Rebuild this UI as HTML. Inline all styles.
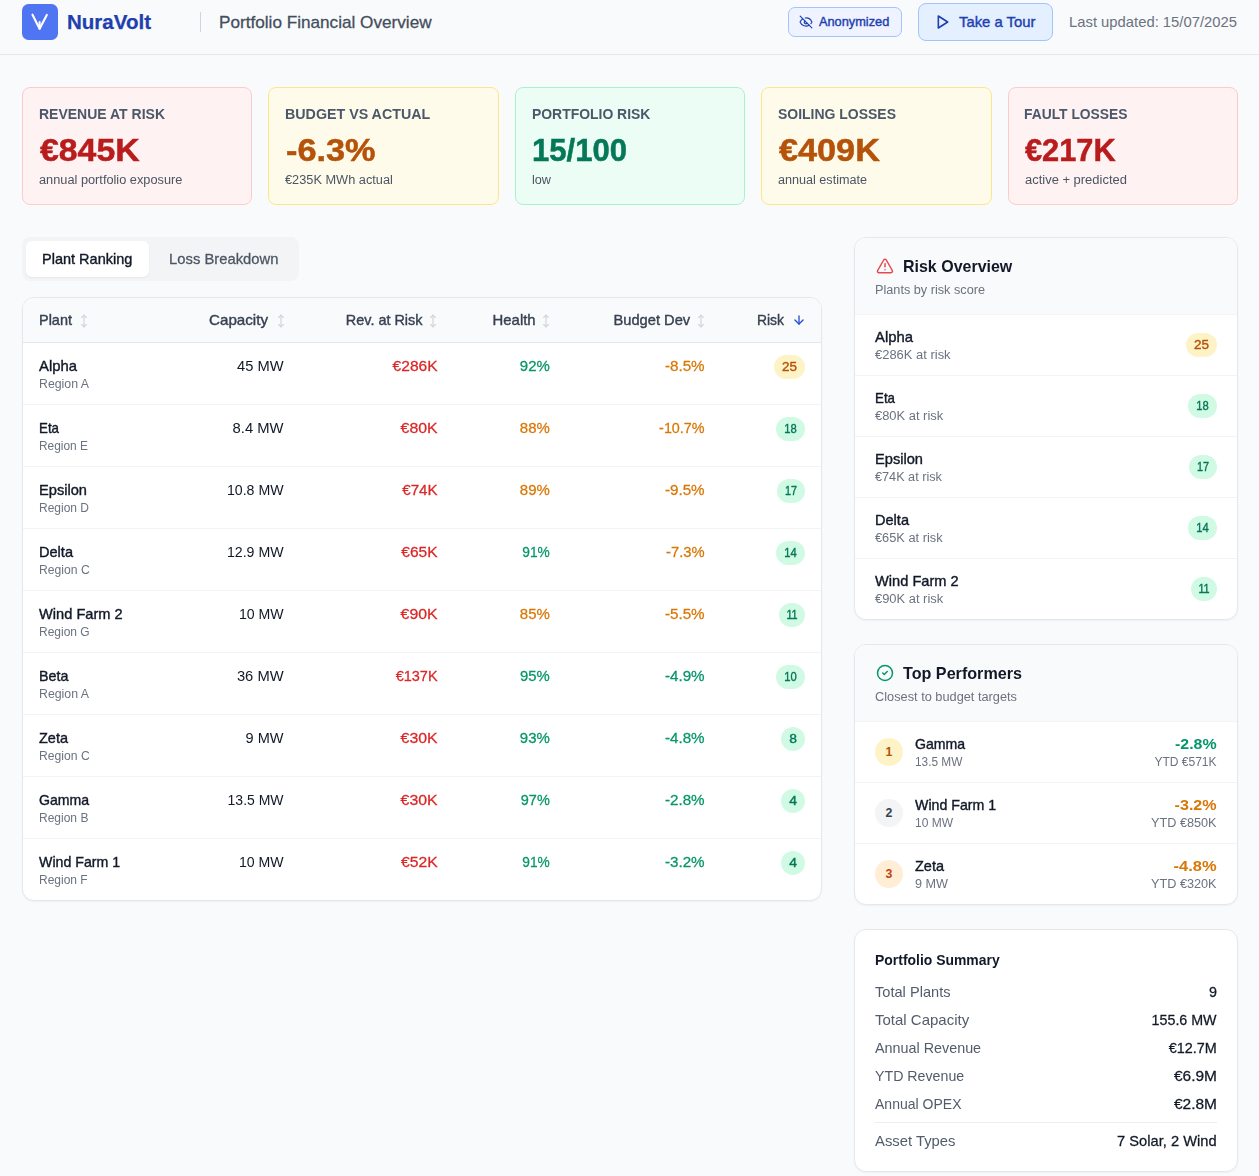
<!DOCTYPE html>
<html lang="en">
<head>
<meta charset="utf-8">
<title>NuraVolt - Portfolio Financial Overview</title>
<style>
*{box-sizing:border-box;margin:0;padding:0}
html,body{width:1259px;height:1176px;overflow:hidden}
body{opacity:.999;background:#f9fafb;font-family:"Liberation Sans",Arial,sans-serif;color:#111827;position:relative}
.m{-webkit-text-stroke:.26px currentColor}
.mm{-webkit-text-stroke:.38px currentColor}
.hdr{position:absolute;left:0;top:0;width:1259px;height:55px;border-bottom:1px solid #e5e7eb;background:#f9fafb}
.logo{position:absolute;left:22px;top:4px;width:35.500px;height:36px;border-radius:6.500px;background:#4f75f3}
.logo svg{position:absolute;left:0;top:0}
.brand{position:absolute;left:66.700px;top:8px;font-size:20.5px;line-height:28px;font-weight:700;color:#1e40af;-webkit-text-stroke:.25px currentColor;white-space:nowrap}
.hdiv{position:absolute;left:200px;top:12px;width:1px;height:20px;background:#d1d5db}
.ptitle{position:absolute;left:218.800px;top:10px;font-size:16.4px;line-height:24px;color:#434d5b;white-space:nowrap}
.anon{position:absolute;left:788px;top:7px;width:114px;height:30px;border:1px solid #a5c4fc;border-radius:7px;background:#eef3ff;color:#1e40af;font-size:12.3px;line-height:28px;white-space:nowrap}
.anon svg{position:absolute;left:9.500px;top:7px}
.anon .x{position:absolute;left:29.600px;top:0}
.tour{position:absolute;left:918px;top:3px;width:135px;height:38px;border:1px solid #a0c4fb;border-radius:8px;background:#e4efff;color:#1e40af;font-size:14.4px;line-height:36px;white-space:nowrap}
.tour svg{position:absolute;left:16px;top:10px}
.tour .x{position:absolute;left:40.300px;top:0}
.upd{position:absolute;left:1068.800px;top:12px;font-size:14.3px;line-height:20px;color:#6b7280;white-space:nowrap}

.kpi{position:absolute;top:87px;width:230.4px;height:118px;border:1px solid;border-radius:8px}
.kpi div{position:absolute;left:16.500px;white-space:nowrap}
.kpi .l{top:15.900px;left:15.800px;font-size:14.3px;line-height:20px;color:#4b5869;font-weight:700}
.kpi .v{top:45.200px;left:16.600px;font-size:31px;line-height:36px;font-weight:700;-webkit-text-stroke:.5px currentColor}
.kpi .s{top:84px;left:16px;font-size:12.3px;line-height:16px;color:#4b5563}
.k-red{background:#fef2f2;border-color:#fecaca}.k-red .v{color:#b91c1c}
.k-yel{background:#fffbeb;border-color:#fde68a}.k-yel .v{color:#b45309}
.k-grn{background:#ecfdf5;border-color:#a7f3d0}.k-grn .v{color:#047857}

.tabs{position:absolute;left:22px;top:237px;width:276.500px;height:44px;border-radius:8px;background:#f3f4f6}
.tab{position:absolute;top:4px;height:36px;border-radius:6px}
.tab div{position:absolute;top:0;font-size:14.4px;line-height:36px;white-space:nowrap;color:#4b5563}
.tab.on{left:4px;width:122.500px;background:#fff;box-shadow:0 1px 2px rgba(0,0,0,.06)}
.tab.on div{left:16.200px;color:#111827}
.tab.off{left:131px;width:141px}
.tab.off div{left:16.200px}

.card{position:absolute;background:#fff;border:1px solid #e5e7eb;border-radius:12px;box-shadow:0 1px 2px rgba(0,0,0,.05);overflow:hidden}
.tbl{left:22px;top:297px;width:800px;height:604px}
.th{position:absolute;left:0;top:0;width:798px;height:45px;background:#f9fafb;border-bottom:1px solid #e5e7eb;font-size:14.4px;line-height:20px;color:#374151}
.th div{position:absolute;top:12px;white-space:nowrap}
.si{position:absolute;top:16px}
.tr{position:absolute;left:0;width:798px;height:62px;border-bottom:1px solid #f3f4f6;font-size:14.4px;line-height:20px}
.tr.last{border-bottom:0}
.tr div{position:absolute;white-space:nowrap}
.tr .n{left:16.300px;top:12.500px;color:#111827}
.tr .r{left:16.300px;top:32.700px;font-size:12.3px;line-height:16px;color:#6b7280}
.tr .c{right:537px;top:12.500px;color:#111827}
.tr .rv{right:383px;top:12.500px;color:#dc2626}
.tr .h{right:271.300px;top:12.500px}
.tr .b{right:116.300px;top:12.500px}
.k{height:24px;border-radius:12px}
.k div{position:absolute;top:0;font-size:12.3px;line-height:24px;white-space:nowrap}
.tr .k{top:12px;right:16px}
.g{color:#059669}.o{color:#d97706}
.kg{background:#d1fae5;color:#047857}.ky{background:#fef3c7;color:#b45309}

.rc{left:854px;width:384px}
.ch{position:absolute;left:0;top:0;width:382px;height:77px;background:#f9fafb;border-bottom:1px solid #f3f4f6}
.ch svg{position:absolute;left:20.500px;top:19px}
.ch .t{position:absolute;left:47.800px;top:16px;font-size:16.3px;line-height:24px;font-weight:700;color:#111827;white-space:nowrap}
.ch .d{position:absolute;left:20.400px;top:43.500px;font-size:12.3px;line-height:16px;color:#6b7280;white-space:nowrap}
.rr{position:absolute;left:0;width:382px;height:61px;border-bottom:1px solid #f3f4f6}
.rr.last{border-bottom:0}
.rr div{position:absolute;white-space:nowrap}
.rr .n{left:20.400px;top:12px;font-size:14.4px;line-height:20px;color:#111827}
.rr .d{left:20.400px;top:32px;font-size:12.3px;line-height:16px;color:#6b7280}
.rr .k{right:20px;top:18px}
.pr .num{left:20px;top:16px;width:28px;height:28px;border-radius:14px;font-size:12.3px;line-height:28px;font-weight:700;text-align:center}
.pr .n{left:60.300px}.pr .d{left:60.300px}
.pr .p{right:20.500px;top:12px;font-size:14.4px;line-height:20px;font-weight:700}
.pr .y{right:20.300px;top:32px;font-size:12.3px;line-height:16px;color:#6b7280}
.n1{background:#fef3c7;color:#b45309}.n2{background:#f3f4f6;color:#374151}.n3{background:#ffedd5;color:#c2410c}
.sum{top:929px;height:243px}
.sum .t{position:absolute;left:20.300px;top:20px;font-size:14.3px;line-height:20px;font-weight:700;color:#111827;white-space:nowrap}
.sr{position:absolute;left:20px;width:342px;height:20px;font-size:14.4px;line-height:20px}
.sr div{position:absolute;top:0;white-space:nowrap}
.sr .a{left:.3px;color:#525c6b}.sr .z{right:.3px;color:#111827}
.sdiv{position:absolute;left:20px;width:342px;top:192px;height:1px;background:#eceef1}
</style>
</head>
<body>
<div class="hdr">
  <div class="logo"><svg width="36" height="36" viewBox="0 0 36 36" fill="none" stroke="#fff" stroke-width="2.1" stroke-linecap="round" stroke-linejoin="round"><path d="M10.500 10.700 L17.6 24.8 L24.800 10.900"/><path d="M17.6 18 L17.6 24.500"/></svg></div>
  <div class="brand" style="transform:scaleX(1.0011);transform-origin:left center;">NuraVolt</div>
  <div class="hdiv"></div>
  <div class="ptitle m" style="transform:scaleX(1.0466);transform-origin:left center;">Portfolio Financial Overview</div>
  <div class="anon"><svg width="14" height="14" viewBox="0 0 24 24" fill="none" stroke="#1e40af" stroke-width="2" stroke-linecap="round" stroke-linejoin="round"><path d="M10.733 5.076a10.744 10.744 0 0 1 11.205 6.575 1 1 0 0 1 0 .696 10.747 10.747 0 0 1-1.444 2.490"/><path d="M14.084 14.158a3 3 0 0 1-4.242-4.242"/><path d="M17.479 17.499a10.750 10.750 0 0 1-15.417-5.151 1 1 0 0 1 0-.696 10.750 10.750 0 0 1 4.446-5.143"/><path d="M2 2l20 20"/></svg><div class="x mm" style="transform:scaleX(1.0388);transform-origin:left center;">Anonymized</div></div>
  <div class="tour"><svg width="16" height="16" viewBox="0 0 24 24" fill="none" stroke="#1e40af" stroke-width="2.4" stroke-linecap="round" stroke-linejoin="round"><path d="M5 3l14 9-14 9z"/></svg><div class="x mm" style="transform:scaleX(1.0318);transform-origin:left center;">Take a Tour</div></div>
  <div class="upd" style="transform:scaleX(1.0358);transform-origin:left center;">Last updated: 15/07/2025</div>
</div>
<div class="kpi k-red" style="left:22px"><div class="l" style="transform:scaleX(0.9791);transform-origin:left center;">REVENUE AT RISK</div><div class="v" style="transform:scaleX(1.0902);transform-origin:left center;">€845K</div><div class="s" style="transform:scaleX(1.0383);transform-origin:left center;">annual portfolio exposure</div></div>
<div class="kpi k-yel" style="left:268.4px"><div class="l" style="transform:scaleX(0.9971);transform-origin:left center;">BUDGET VS ACTUAL</div><div class="v" style="transform:scaleX(1.1052);transform-origin:left center;">-6.3%</div><div class="s" style="transform:scaleX(1.0384);transform-origin:left center;">€235K MWh actual</div></div>
<div class="kpi k-grn" style="left:514.8px"><div class="l" style="transform:scaleX(0.9742);transform-origin:left center;">PORTFOLIO RISK</div><div class="v" style="transform:scaleX(1.0029);transform-origin:left center;">15/100</div><div class="s" style="transform:scaleX(1.0296);transform-origin:left center;">low</div></div>
<div class="kpi k-yel" style="left:761.2px"><div class="l" style="transform:scaleX(0.9772);transform-origin:left center;">SOILING LOSSES</div><div class="v" style="transform:scaleX(1.1044);transform-origin:left center;">€409K</div><div class="s" style="transform:scaleX(1.0250);transform-origin:left center;">annual estimate</div></div>
<div class="kpi k-red" style="left:1007.6px"><div class="l" style="transform:scaleX(0.9676);transform-origin:left center;">FAULT LOSSES</div><div class="v" style="transform:scaleX(0.9917);transform-origin:left center;">€217K</div><div class="s" style="transform:scaleX(1.0534);transform-origin:left center;">active + predicted</div></div>
<div class="tabs"><div class="tab on"><div class="mm" style="transform:scaleX(1.0088);transform-origin:left center;">Plant Ranking</div></div><div class="tab off"><div class="m" style="transform:scaleX(1.0291);transform-origin:left center;">Loss Breakdown</div></div></div>
<div class="card tbl">
  <div class="th">
    <div class="mm" style="left:16.300px;transform:scaleX(1.0057);transform-origin:left center;">Plant</div><svg class="si" style="left:54.0px;top:16px" width="14" height="14" viewBox="0 0 24 24" fill="none" stroke="#d1d5db" stroke-width="2" stroke-linecap="round" stroke-linejoin="round"><path d="M8 18l4 4 4-4"/><path d="M8 6l4-4 4 4"/><path d="M12 2v20"/></svg>
    <div class="mm" style="right:552.7px;transform:scaleX(1.0536);transform-origin:right center;">Capacity</div><svg class="si" style="left:250.6px;top:16px" width="14" height="14" viewBox="0 0 24 24" fill="none" stroke="#d1d5db" stroke-width="2" stroke-linecap="round" stroke-linejoin="round"><path d="M8 18l4 4 4-4"/><path d="M8 6l4-4 4 4"/><path d="M12 2v20"/></svg>
    <div class="mm" style="right:398.3px;transform:scaleX(1.0026);transform-origin:right center;">Rev. at Risk</div><svg class="si" style="left:403.3px;top:16px" width="14" height="14" viewBox="0 0 24 24" fill="none" stroke="#d1d5db" stroke-width="2" stroke-linecap="round" stroke-linejoin="round"><path d="M8 18l4 4 4-4"/><path d="M8 6l4-4 4 4"/><path d="M12 2v20"/></svg>
    <div class="mm" style="right:285.7px;transform:scaleX(1.0334);transform-origin:right center;">Health</div><svg class="si" style="left:516.3px;top:16px" width="14" height="14" viewBox="0 0 24 24" fill="none" stroke="#d1d5db" stroke-width="2" stroke-linecap="round" stroke-linejoin="round"><path d="M8 18l4 4 4-4"/><path d="M8 6l4-4 4 4"/><path d="M12 2v20"/></svg>
    <div class="mm" style="right:131px;transform:scaleX(1.0199);transform-origin:right center;">Budget Dev</div><svg class="si" style="left:671.3px;top:16px" width="14" height="14" viewBox="0 0 24 24" fill="none" stroke="#d1d5db" stroke-width="2" stroke-linecap="round" stroke-linejoin="round"><path d="M8 18l4 4 4-4"/><path d="M8 6l4-4 4 4"/><path d="M12 2v20"/></svg>
    <div class="mm" style="right:36.7px;transform:scaleX(0.9648);transform-origin:right center;">Risk</div><svg class="si" style="left:768.8px;top:14.7px" width="14" height="14" viewBox="0 0 24 24" fill="none" stroke="#2450d6" stroke-width="2.3" stroke-linecap="round" stroke-linejoin="round"><path d="M12 5v14"/><path d="M19 12l-7 7-7-7"/></svg>
  </div>
  <div class="tr" style="top:45px"><div class="n mm" style="transform:scaleX(1.0323);transform-origin:left center;">Alpha</div><div class="r" style="transform:scaleX(1.0016);transform-origin:left center;">Region A</div><div class="c" style="transform:scaleX(1.0202);transform-origin:right center;">45 MW</div><div class="rv m" style="transform:scaleX(1.0811);transform-origin:right center;">€286K</div><div class="h m g" style="transform:scaleX(1.0412);transform-origin:right center;">92%</div><div class="b m o" style="transform:scaleX(1.0560);transform-origin:right center;">-8.5%</div><div class="k ky" style="width:31px"><div class="mm" style="left:0;width:100%;text-align:center;transform:scaleX(1.0959);transform-origin:center center;">25</div></div></div>
  <div class="tr" style="top:107px"><div class="n mm" style="transform:scaleX(0.9255);transform-origin:left center;">Eta</div><div class="r" style="transform:scaleX(0.9685);transform-origin:left center;">Region E</div><div class="c" style="transform:scaleX(1.0287);transform-origin:right center;">8.4 MW</div><div class="rv m" style="transform:scaleX(1.1009);transform-origin:right center;">€80K</div><div class="h m o" style="transform:scaleX(1.0412);transform-origin:right center;">88%</div><div class="b m o" style="transform:scaleX(0.9976);transform-origin:right center;">-10.7%</div><div class="k kg" style="width:29px"><div class="mm" style="left:0;width:100%;text-align:center;transform:scaleX(0.9132);transform-origin:center center;">18</div></div></div>
  <div class="tr" style="top:169px"><div class="n mm" style="transform:scaleX(1.0169);transform-origin:left center;">Epsilon</div><div class="r" style="transform:scaleX(0.9753);transform-origin:left center;">Region D</div><div class="c" style="transform:scaleX(0.9847);transform-origin:right center;">10.8 MW</div><div class="rv m" style="transform:scaleX(1.0503);transform-origin:right center;">€74K</div><div class="h m o" style="transform:scaleX(1.0412);transform-origin:right center;">89%</div><div class="b m o" style="transform:scaleX(1.0560);transform-origin:right center;">-9.5%</div><div class="k kg" style="width:28px"><div class="mm" style="left:0;width:100%;text-align:center;transform:scaleX(0.8800);transform-origin:center center;">17</div></div></div>
  <div class="tr" style="top:231px"><div class="n mm" style="transform:scaleX(1.0116);transform-origin:left center;">Delta</div><div class="r" style="transform:scaleX(0.9890);transform-origin:left center;">Region C</div><div class="c" style="transform:scaleX(0.9847);transform-origin:right center;">12.9 MW</div><div class="rv m" style="transform:scaleX(1.0801);transform-origin:right center;">€65K</div><div class="h m g" style="transform:scaleX(0.9544);transform-origin:right center;">91%</div><div class="b m o" style="transform:scaleX(1.0241);transform-origin:right center;">-7.3%</div><div class="k kg" style="width:29px"><div class="mm" style="left:0;width:100%;text-align:center;transform:scaleX(0.9132);transform-origin:center center;">14</div></div></div>
  <div class="tr" style="top:293px"><div class="n mm" style="transform:scaleX(1.0161);transform-origin:left center;">Wind Farm 2</div><div class="r" style="transform:scaleX(0.9759);transform-origin:left center;">Region G</div><div class="c" style="transform:scaleX(0.9807);transform-origin:right center;">10 MW</div><div class="rv m" style="transform:scaleX(1.1009);transform-origin:right center;">€90K</div><div class="h m o" style="transform:scaleX(1.0412);transform-origin:right center;">85%</div><div class="b m o" style="transform:scaleX(1.0560);transform-origin:right center;">-5.5%</div><div class="k kg" style="width:26px"><div class="mm" style="left:0;width:100%;text-align:center;transform:scaleX(0.8800);transform-origin:center center;">11</div></div></div>
  <div class="tr" style="top:355px"><div class="n mm" style="transform:scaleX(0.9929);transform-origin:left center;">Beta</div><div class="r" style="transform:scaleX(1.0016);transform-origin:left center;">Region A</div><div class="c" style="transform:scaleX(1.0246);transform-origin:right center;">36 MW</div><div class="rv m" style="transform:scaleX(1.0090);transform-origin:right center;">€137K</div><div class="h m g" style="transform:scaleX(1.0308);transform-origin:right center;">95%</div><div class="b m g" style="transform:scaleX(1.0560);transform-origin:right center;">-4.9%</div><div class="k kg" style="width:29px"><div class="mm" style="left:0;width:100%;text-align:center;transform:scaleX(0.9132);transform-origin:center center;">10</div></div></div>
  <div class="tr" style="top:417px"><div class="n mm" style="transform:scaleX(1.0071);transform-origin:left center;">Zeta</div><div class="r" style="transform:scaleX(0.9890);transform-origin:left center;">Region C</div><div class="c" style="transform:scaleX(1.0112);transform-origin:right center;">9 MW</div><div class="rv m" style="transform:scaleX(1.1009);transform-origin:right center;">€30K</div><div class="h m g" style="transform:scaleX(1.0412);transform-origin:right center;">93%</div><div class="b m g" style="transform:scaleX(1.0560);transform-origin:right center;">-4.8%</div><div class="k kg" style="width:24px"><div class="mm" style="left:0;width:100%;text-align:center;transform:scaleX(1.1251);transform-origin:center center;">8</div></div></div>
  <div class="tr" style="top:479px"><div class="n mm" style="transform:scaleX(0.9807);transform-origin:left center;">Gamma</div><div class="r" style="transform:scaleX(0.9764);transform-origin:left center;">Region B</div><div class="c" style="transform:scaleX(0.9726);transform-origin:right center;">13.5 MW</div><div class="rv m" style="transform:scaleX(1.1009);transform-origin:right center;">€30K</div><div class="h m g" style="transform:scaleX(1.0065);transform-origin:right center;">97%</div><div class="b m g" style="transform:scaleX(1.0560);transform-origin:right center;">-2.8%</div><div class="k kg" style="width:24px"><div class="mm" style="left:0;width:100%;text-align:center;transform:scaleX(1.1251);transform-origin:center center;">4</div></div></div>
  <div class="tr last" style="top:541px"><div class="n mm" style="transform:scaleX(0.9857);transform-origin:left center;">Wind Farm 1</div><div class="r" style="transform:scaleX(0.9758);transform-origin:left center;">Region F</div><div class="c" style="transform:scaleX(0.9807);transform-origin:right center;">10 MW</div><div class="rv m" style="transform:scaleX(1.0920);transform-origin:right center;">€52K</div><div class="h m g" style="transform:scaleX(0.9544);transform-origin:right center;">91%</div><div class="b m g" style="transform:scaleX(1.0560);transform-origin:right center;">-3.2%</div><div class="k kg" style="width:24px"><div class="mm" style="left:0;width:100%;text-align:center;transform:scaleX(1.1251);transform-origin:center center;">4</div></div></div>
</div>
<div class="card rc" style="top:237px;height:383px">
  <div class="ch"><svg width="18" height="18" viewBox="0 0 24 24" fill="none" stroke="#e5484d" stroke-width="2" stroke-linecap="round" stroke-linejoin="round"><path d="M21.730 18l-8-14a2 2 0 0 0-3.480 0l-8 14A2 2 0 0 0 4 21h16a2 2 0 0 0 1.730-3"/><path d="M12 9v4"/><path d="M12 17h.01"/></svg><div class="t" style="transform:scaleX(0.9818);transform-origin:left center;">Risk Overview</div><div class="d" style="transform:scaleX(1.0318);transform-origin:left center;">Plants by risk score</div></div>
  <div class="rr" style="top:77px"><div class="n mm" style="transform:scaleX(1.0323);transform-origin:left center;">Alpha</div><div class="d" style="transform:scaleX(1.0532);transform-origin:left center;">€286K at risk</div><div class="k ky" style="width:31px"><div class="mm" style="left:0;width:100%;text-align:center;transform:scaleX(1.0959);transform-origin:center center;">25</div></div></div>
  <div class="rr" style="top:138px"><div class="n mm" style="transform:scaleX(0.9255);transform-origin:left center;">Eta</div><div class="d" style="transform:scaleX(1.0502);transform-origin:left center;">€80K at risk</div><div class="k kg" style="width:29px"><div class="mm" style="left:0;width:100%;text-align:center;transform:scaleX(0.9132);transform-origin:center center;">18</div></div></div>
  <div class="rr" style="top:199px"><div class="n mm" style="transform:scaleX(1.0169);transform-origin:left center;">Epsilon</div><div class="d" style="transform:scaleX(1.0302);transform-origin:left center;">€74K at risk</div><div class="k kg" style="width:28px"><div class="mm" style="left:0;width:100%;text-align:center;transform:scaleX(0.8800);transform-origin:center center;">17</div></div></div>
  <div class="rr" style="top:260px"><div class="n mm" style="transform:scaleX(1.0116);transform-origin:left center;">Delta</div><div class="d" style="transform:scaleX(1.0410);transform-origin:left center;">€65K at risk</div><div class="k kg" style="width:29px"><div class="mm" style="left:0;width:100%;text-align:center;transform:scaleX(0.9132);transform-origin:center center;">14</div></div></div>
  <div class="rr last" style="top:321px"><div class="n mm" style="transform:scaleX(1.0161);transform-origin:left center;">Wind Farm 2</div><div class="d" style="transform:scaleX(1.0502);transform-origin:left center;">€90K at risk</div><div class="k kg" style="width:26px"><div class="mm" style="left:0;width:100%;text-align:center;transform:scaleX(0.8800);transform-origin:center center;">11</div></div></div>
</div>
<div class="card rc" style="top:644px;height:261px">
  <div class="ch"><svg width="18" height="18" viewBox="0 0 24 24" fill="none" stroke="#059669" stroke-width="2" stroke-linecap="round" stroke-linejoin="round"><circle cx="12" cy="12" r="10"/><path d="M9 12l2 2 4-4"/></svg><div class="t" style="transform:scaleX(0.9914);transform-origin:left center;">Top Performers</div><div class="d" style="transform:scaleX(1.0386);transform-origin:left center;">Closest to budget targets</div></div>
  <div class="rr pr" style="top:77px"><div class="num n1">1</div><div class="n mm" style="transform:scaleX(0.9807);transform-origin:left center;">Gamma</div><div class="d" style="transform:scaleX(0.9634);transform-origin:left center;">13.5 MW</div><div class="p g" style="transform:scaleX(1.1066);transform-origin:right center;">-2.8%</div><div class="y" style="transform:scaleX(0.9783);transform-origin:right center;">YTD €571K</div></div>
  <div class="rr pr" style="top:138px"><div class="num n2">2</div><div class="n mm" style="transform:scaleX(0.9857);transform-origin:left center;">Wind Farm 1</div><div class="d" style="transform:scaleX(0.9755);transform-origin:left center;">10 MW</div><div class="p o" style="transform:scaleX(1.1172);transform-origin:right center;">-3.2%</div><div class="y" style="transform:scaleX(1.0318);transform-origin:right center;">YTD €850K</div></div>
  <div class="rr pr last" style="top:199px"><div class="num n3">3</div><div class="n mm" style="transform:scaleX(1.0071);transform-origin:left center;">Zeta</div><div class="d" style="transform:scaleX(1.0277);transform-origin:left center;">9 MW</div><div class="p o" style="transform:scaleX(1.1438);transform-origin:right center;">-4.8%</div><div class="y" style="transform:scaleX(1.0318);transform-origin:right center;">YTD €320K</div></div>
</div>
<div class="card rc sum">
  <div class="t" style="transform:scaleX(0.9749);transform-origin:left center;">Portfolio Summary</div>
  <div class="sr" style="top:51.5px"><div class="a" style="transform:scaleX(1.0149);transform-origin:left center;">Total Plants</div><div class="z m" style="transform:scaleX(0.9981);transform-origin:right center;">9</div></div>
  <div class="sr" style="top:79.5px"><div class="a" style="transform:scaleX(1.0421);transform-origin:left center;">Total Capacity</div><div class="z m" style="transform:scaleX(0.9909);transform-origin:right center;">155.6 MW</div></div>
  <div class="sr" style="top:107.5px"><div class="a" style="transform:scaleX(0.9970);transform-origin:left center;">Annual Revenue</div><div class="z m" style="transform:scaleX(1.0000);transform-origin:right center;">€12.7M</div></div>
  <div class="sr" style="top:135.5px"><div class="a" style="transform:scaleX(0.9868);transform-origin:left center;">YTD Revenue</div><div class="z m" style="transform:scaleX(1.0750);transform-origin:right center;">€6.9M</div></div>
  <div class="sr" style="top:163.5px"><div class="a" style="transform:scaleX(0.9741);transform-origin:left center;">Annual OPEX</div><div class="z m" style="transform:scaleX(1.0750);transform-origin:right center;">€2.8M</div></div>
  <div class="sdiv"></div>
  <div class="sr" style="top:201px"><div class="a" style="transform:scaleX(1.0304);transform-origin:left center;">Asset Types</div><div class="z m" style="transform:scaleX(1.0195);transform-origin:right center;">7 Solar, 2 Wind</div></div>
</div>
</body>
</html>
